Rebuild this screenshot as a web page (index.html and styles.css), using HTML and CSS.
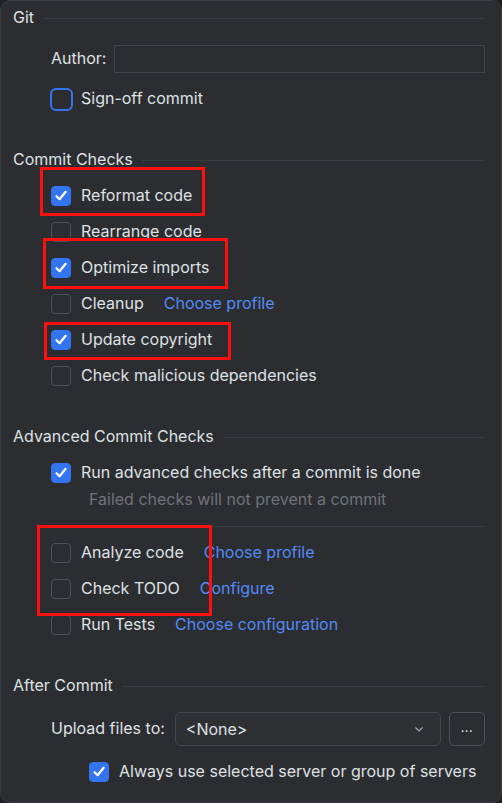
FILE: index.html
```html
<!DOCTYPE html>
<html>
<head>
<meta charset="utf-8">
<link rel="stylesheet" href="styles.css">
</head>
<body>
<div class="panel">
  <div class="header first"><span>Git</span><i class="rule"></i></div>
  <div class="row field">
    <span class="label">Author:</span>
    <div class="input"></div>
  </div>
  <div class="row signoff">
    <span class="cb focus"></span><span class="text">Sign-off commit</span>
  </div>

  <div class="header"><span>Commit Checks</span><i class="rule"></i></div>
  <div class="list">
    <div class="row"><span class="cb on"><svg viewBox="0 0 20 20"><path d="M5.5 10.2 L8.6 13.2 L14.6 5.8"/></svg></span><span class="text">Reformat code</span></div>
    <div class="row"><span class="cb"></span><span class="text">Rearrange code</span></div>
    <div class="row"><span class="cb on"><svg viewBox="0 0 20 20"><path d="M5.5 10.2 L8.6 13.2 L14.6 5.8"/></svg></span><span class="text">Optimize imports</span></div>
    <div class="row"><span class="cb"></span><span class="text">Cleanup</span><a class="link">Choose profile</a></div>
    <div class="row"><span class="cb on"><svg viewBox="0 0 20 20"><path d="M5.5 10.2 L8.6 13.2 L14.6 5.8"/></svg></span><span class="text">Update copyright</span></div>
    <div class="row"><span class="cb"></span><span class="text">Check malicious dependencies</span></div>
  </div>

  <div class="header"><span>Advanced Commit Checks</span><i class="rule"></i></div>
  <div class="list">
    <div class="row"><span class="cb on"><svg viewBox="0 0 20 20"><path d="M5.5 10.2 L8.6 13.2 L14.6 5.8"/></svg></span><span class="text">Run advanced checks after a commit is done</span></div>
    <div class="hint">Failed checks will not prevent a commit</div>
    <div class="sep"></div>
    <div class="row"><span class="cb"></span><span class="text">Analyze code</span><a class="link">Choose profile</a></div>
    <div class="row"><span class="cb"></span><span class="text">Check TODO</span><a class="link">Configure</a></div>
    <div class="row"><span class="cb"></span><span class="text">Run Tests</span><a class="link">Choose configuration</a></div>
  </div>

  <div class="header"><span>After Commit</span><i class="rule"></i></div>
  <div class="row field upload">
    <span class="label">Upload files to:</span>
    <div class="combo"><span>&lt;None&gt;</span>
      <svg width="12" height="12" viewBox="0 0 12 12"><path d="M2.5 4.5 L6 8 L9.5 4.5" fill="none" stroke="#a8adb5" stroke-width="1.2"/></svg>
    </div>
    <div class="dots">...</div>
  </div>
  <div class="row sub">
    <span class="cb on"><svg viewBox="0 0 20 20"><path d="M5.5 10.2 L8.6 13.2 L14.6 5.8"/></svg></span><span class="text">Always use selected server or group of servers</span>
  </div>

  <div class="mark m1"></div>
  <div class="mark m2"></div>
  <div class="mark m3"></div>
  <div class="mark m4"></div>
</div>
</body>
</html>
```
FILE: styles.css
```css
html, body {
  margin: 0;
  padding: 0;
  background: #1e1f22;
}
body {
  font-family: Inter, "Noto Sans", sans-serif;
  font-size: 16px;
  letter-spacing: 0;
  color: #dfe1e5;
}
.panel {
  position: relative;
  box-sizing: border-box;
  width: 502px;
  height: 803px;
  background: #2b2d30;
  border: 1px solid #393b40;
  border-radius: 10px;
  padding: 7px 16px 0 12px;
}
.header {
  display: flex;
  align-items: center;
  gap: 9px;
  height: 20px;
  line-height: 20px;
  margin-top: 33px;
  margin-bottom: 8px;
}
.header span {
  position: relative;
  top: -1px;
}
.header.first {
  margin-top: 0;
  margin-bottom: 13px;
}
.rule {
  flex: 1;
  height: 1px;
  background: #393b40;
}
.list {
  display: flex;
  flex-direction: column;
}
.row {
  display: flex;
  align-items: center;
  height: 36px;
  padding-left: 38px;
}
.text, .link, .field .label {
  position: relative;
  top: -1px;
}
.row.signoff {
  margin-top: 4px;
}
.row.sub {
  padding-left: 76px;
  margin-top: 7px;
}
.cb {
  box-sizing: border-box;
  width: 20px;
  height: 20px;
  border: 1px solid #4e5157;
  border-radius: 4px;
  flex: none;
  margin-right: 10px;
  display: flex;
}
.cb svg {
  width: 20px;
  height: 20px;
  margin: -1px;
}
.cb svg path {
  fill: none;
  stroke: #ffffff;
  stroke-width: 2.2;
  stroke-linecap: round;
  stroke-linejoin: round;
}
.cb.focus {
  border: 2.5px solid #3574f0;
  width: 23px;
  height: 23px;
  margin-left: -1.5px;
  margin-right: 8.5px;
  border-radius: 6px;
}
.cb.on {
  background: #3574f0;
  border-color: #3574f0;
}
.text {
  white-space: nowrap;
}
.link {
  color: #548af7;
  margin-left: 20px;
  white-space: nowrap;
}
.hint {
  color: #6f737a;
  padding-left: 76px;
  height: 18px;
  line-height: 18px;
  position: relative;
  top: -1px;
}
.sep {
  height: 1px;
  background: #393b40;
  margin: 17px 0 8px 38px;
}
.field .label {
  white-space: nowrap;
  margin-right: 8px;
}
.input {
  flex: 1;
  box-sizing: border-box;
  height: 28px;
  border: 1px solid #43454a;
  background: #2b2d30;
}
.upload {
  margin-top: 15px;
}
.upload .label {
  margin-right: 10px;
}
.combo {
  flex: 1;
  box-sizing: border-box;
  height: 34px;
  display: flex;
  align-items: center;
  justify-content: space-between;
  padding: 0 15px 0 10px;
  background: #2f3034;
  border: 1px solid #43454a;
  border-radius: 5px;
}
.dots {
  box-sizing: border-box;
  flex: none;
  width: 36px;
  height: 34px;
  margin-left: 8px;
  border: 1px solid #4e5157;
  border-radius: 5px;
  display: flex;
  align-items: center;
  justify-content: center;
  font-size: 13px;
  letter-spacing: 0.5px;
  padding-bottom: 5px;
}
.mark {
  position: absolute;
  border: 3px solid #ff1010;
}
.m1 { left: 39px; top: 166px; width: 159px; height: 43px; }
.m2 { left: 42px; top: 237px; width: 179px; height: 45px; }
.m3 { left: 43px; top: 321px; width: 181px; height: 32px; }
.m4 { left: 36px; top: 524px; width: 169px; height: 85px; }
```
